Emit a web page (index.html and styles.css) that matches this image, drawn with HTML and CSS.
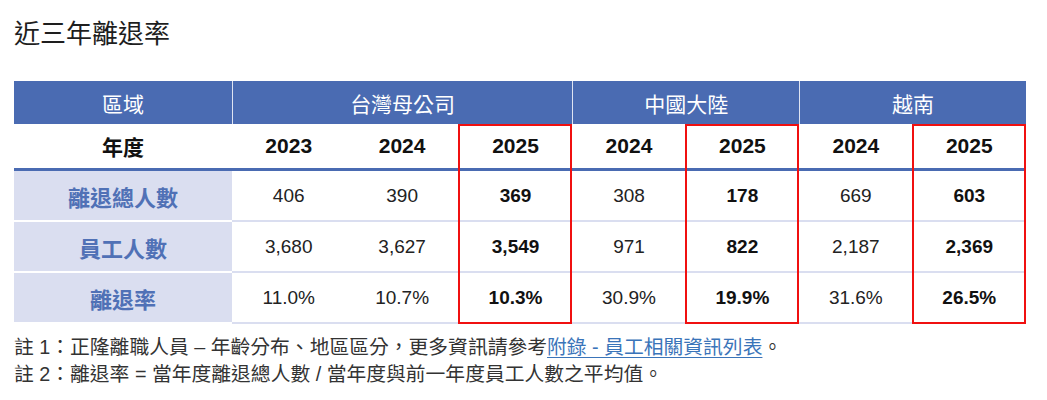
FILE: index.html
```html
<!DOCTYPE html>
<html lang="zh-Hant">
<head>
<meta charset="utf-8">
<title>近三年離退率</title>
<link rel="stylesheet" href="styles.css">
</head>
<body>
<main class="page">
  <h1 class="title">近三年離退率</h1>
  <table class="rate-table">
    <colgroup>
      <col class="col-label">
      <col class="col-num"><col class="col-num"><col class="col-num">
      <col class="col-num"><col class="col-num">
      <col class="col-num"><col class="col-num">
    </colgroup>
    <thead>
      <tr class="row-region">
        <th>區域</th>
        <th colspan="3" class="sep">台灣母公司</th>
        <th colspan="2" class="sep">中國大陸</th>
        <th colspan="2" class="sep">越南</th>
      </tr>
      <tr class="row-year">
        <th>年度</th>
        <th>2023</th>
        <th>2024</th>
        <th class="hl hl-top">2025</th>
        <th>2024</th>
        <th class="hl hl-top">2025</th>
        <th>2024</th>
        <th class="hl hl-top">2025</th>
      </tr>
    </thead>
    <tbody>
      <tr>
        <th class="label">離退總人數</th>
        <td>406</td>
        <td>390</td>
        <td class="hl strong">369</td>
        <td>308</td>
        <td class="hl strong">178</td>
        <td>669</td>
        <td class="hl strong">603</td>
      </tr>
      <tr>
        <th class="label">員工人數</th>
        <td>3,680</td>
        <td>3,627</td>
        <td class="hl strong">3,549</td>
        <td>971</td>
        <td class="hl strong">822</td>
        <td>2,187</td>
        <td class="hl strong">2,369</td>
      </tr>
      <tr>
        <th class="label">離退率</th>
        <td>11.0%</td>
        <td>10.7%</td>
        <td class="hl hl-bottom strong">10.3%</td>
        <td>30.9%</td>
        <td class="hl hl-bottom strong">19.9%</td>
        <td>31.6%</td>
        <td class="hl hl-bottom strong">26.5%</td>
      </tr>
    </tbody>
  </table>
  <div class="notes">
    <p>註 1：正隆離職人員 – 年齡分布、地區區分，更多資訊請參考<a href="#" class="link">附錄 - 員工相關資訊列表</a>。</p>
    <p>註 2：離退率 = 當年度離退總人數 / 當年度與前一年度員工人數之平均值。</p>
  </div>
</main>
</body>
</html>
```

FILE: styles.css
```css
html, body {
  margin: 0;
  padding: 0;
  background: #ffffff;
}

body {
  font-family: "Liberation Sans", "Noto Sans CJK TC", sans-serif;
  color: #222222;
}

.page {
  padding: 21px 20px 0 14px;
}

.title {
  margin: 0;
  font-size: 26px;
  line-height: 27px;
  font-weight: normal;
  color: #1e1e1e;
}

.rate-table {
  margin-top: 33px;
  width: 1012px;
  border-collapse: separate;
  border-spacing: 0;
  table-layout: fixed;
}

.col-label {
  width: 218px;
}

.rate-table th,
.rate-table td {
  padding: 0;
  text-align: center;
  vertical-align: middle;
  position: relative;
}

.row-region th {
  height: 43px;
  background: #4a6bb2;
  color: #ffffff;
  font-size: 21px;
  font-weight: normal;
}

.row-region th.sep {
  border-left: 1px solid #dfe4f2;
}

.row-year th {
  height: 44px;
  font-size: 21px;
  font-weight: bold;
  color: #111111;
  border-bottom: 3px solid #4a6bb2;
}

.rate-table tbody th.label {
  height: 49px;
  background: #dadef0;
  color: #5071b6;
  font-size: 22px;
  font-weight: bold;
  border-bottom: 2px solid #ffffff;
}

.rate-table tbody td {
  height: 49px;
  font-size: 19px;
  color: #222222;
  border-bottom: 2px solid #dadef0;
}

.rate-table td.strong {
  font-weight: bold;
  color: #111111;
}

.hl::after {
  content: "";
  position: absolute;
  top: 0;
  bottom: -3px;
  left: -1px;
  right: 0;
  border-left: 2px solid #f01010;
  border-right: 2px solid #f01010;
  pointer-events: none;
}

.rate-table tbody .hl::after {
  bottom: -2px;
}

.hl-top::after {
  border-top: 2px solid #f01010;
}

.rate-table tbody .hl-bottom::after {
  bottom: -2px;
  border-bottom: 2px solid #f01010;
}

.notes {
  margin-top: 10px;
  font-size: 19.8px;
  line-height: 27px;
  color: #333333;
}

.notes p {
  margin: 0;
}

.link {
  color: #3a74b9;
  text-decoration: underline;
  text-underline-offset: 3px;
}
```
